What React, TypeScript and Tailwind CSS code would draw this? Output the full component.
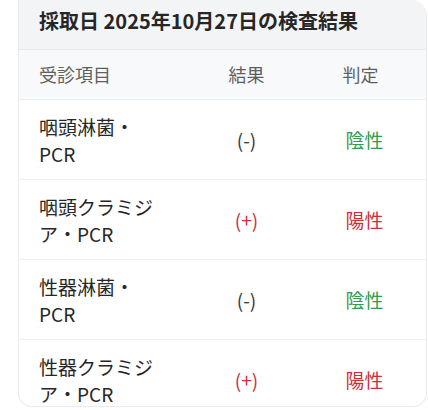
import React from "react";

type Row = {
  name: string;
  positive: boolean;
};

const rows: Row[] = [
  { name: "咽頭淋菌・PCR", positive: false },
  { name: "咽頭クラミジア・PCR", positive: true },
  { name: "性器淋菌・PCR", positive: false },
  { name: "性器クラミジア・PCR", positive: true },
];

const font = { fontFamily: '"Noto Sans CJK JP", "Noto Sans", sans-serif' };

export default function App() {
  return (
    <div className="w-[428px] h-[410px] bg-white overflow-hidden" style={font}>
      <div className="ml-[18px] w-[409px] h-[407px] overflow-hidden rounded-tr-[16px] rounded-b-[14px] border border-t-0 border-[#e9ebee] bg-white">
        <div className="h-[50px] bg-[#f3f4f6] border-b border-[#e8eaed] pl-5 pt-[7px]">
          <h2 className="text-[20px] leading-[28px] font-bold text-[#262626]">
            採取日 2025年10月27日の検査結果
          </h2>
        </div>

        <div className="grid grid-cols-[175px_105px_1fr] h-[50px] items-center bg-[#f8f9fa] border-b border-[#eceef0] text-[18px] text-[#5f5f5f]">
          <div className="pl-5">受診項目</div>
          <div className="text-center">結果</div>
          <div className="text-center pr-1">判定</div>
        </div>

        {rows.map((row) => (
          <div
            key={row.name}
            className="grid grid-cols-[175px_105px_1fr] h-[80px] items-center border-b border-[#eef0f2] text-[19px] leading-[27px]"
          >
            <div className="pl-5 pr-[35px] text-[#262626]">{row.name}</div>
            <div
              className={`text-center ${
                row.positive ? "text-[#cc2f3a]" : "text-[#3a3a3a]"
              }`}
            >
              {row.positive ? "(+)" : "(-)"}
            </div>
            <div
              className={`text-center pl-1 ${
                row.positive ? "text-[#cc2f3a]" : "text-[#359a4e]"
              }`}
            >
              {row.positive ? "陽性" : "陰性"}
            </div>
          </div>
        ))}
      </div>
    </div>
  );
}
